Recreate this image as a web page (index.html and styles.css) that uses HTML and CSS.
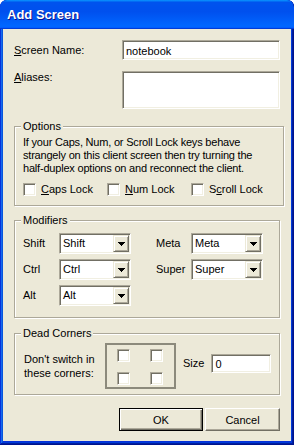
FILE: index.html
```html
<!DOCTYPE html>
<html lang="en">
<head>
    <meta charset="UTF-8">
    <title>Add Screen</title>
    <link rel="stylesheet" href="styles.css">
</head>
<body>

    <div class="window">
        <div class="titlebar">
            <span class="title">Add Screen</span>
        </div>

        <div class="client">
            <!-- Имя экрана -->
            <div class="row name-row">
                <label class="row-label"><u>S</u>creen Name:</label>
                <div class="field">notebook</div>
            </div>

            <div class="row alias-row">
                <label class="row-label"><u>A</u>liases:</label>
                <div class="field field-tall"></div>
            </div>

            <!-- Опции -->
            <fieldset class="group options">
                <legend>Options</legend>
                <p class="note">If your Caps, Num, or Scroll Lock keys behave<br>strangely on this client screen then try turning the<br>half-duplex options on and reconnect the client.</p>
                <div class="checks">
                    <label class="check"><span class="box"></span><span><u>C</u>aps Lock</span></label>
                    <label class="check"><span class="box"></span><span><u>N</u>um Lock</span></label>
                    <label class="check"><span class="box"></span><span>S<u>c</u>roll Lock</span></label>
                </div>
            </fieldset>

            <!-- Модификаторы -->
            <fieldset class="group modifiers">
                <legend>Modifiers</legend>
                <div class="mod-grid">
                    <span>Shift</span>
                    <div class="combo"><span class="combo-text">Shift</span><span class="combo-btn"><svg width="7" height="4" shape-rendering="crispEdges"><path d="M0 0h7v1H0zM1 1h5v1H1zM2 2h3v1H2zM3 3h1v1H3z"/></svg></span></div>
                    <span>Meta</span>
                    <div class="combo"><span class="combo-text">Meta</span><span class="combo-btn"><svg width="7" height="4" shape-rendering="crispEdges"><path d="M0 0h7v1H0zM1 1h5v1H1zM2 2h3v1H2zM3 3h1v1H3z"/></svg></span></div>

                    <span>Ctrl</span>
                    <div class="combo"><span class="combo-text">Ctrl</span><span class="combo-btn"><svg width="7" height="4" shape-rendering="crispEdges"><path d="M0 0h7v1H0zM1 1h5v1H1zM2 2h3v1H2zM3 3h1v1H3z"/></svg></span></div>
                    <span>Super</span>
                    <div class="combo"><span class="combo-text">Super</span><span class="combo-btn"><svg width="7" height="4" shape-rendering="crispEdges"><path d="M0 0h7v1H0zM1 1h5v1H1zM2 2h3v1H2zM3 3h1v1H3z"/></svg></span></div>

                    <span>Alt</span>
                    <div class="combo"><span class="combo-text">Alt</span><span class="combo-btn"><svg width="7" height="4" shape-rendering="crispEdges"><path d="M0 0h7v1H0zM1 1h5v1H1zM2 2h3v1H2zM3 3h1v1H3z"/></svg></span></div>
                </div>
            </fieldset>

            <!-- Мёртвые углы -->
            <fieldset class="group corners">
                <legend>Dead Corners</legend>
                <div class="corner-row">
                    <p class="corner-text">Don't switch in<br>these corners:</p>
                    <div class="corner-box">
                        <span class="box small"></span>
                        <span class="box small"></span>
                        <span class="box small"></span>
                        <span class="box small"></span>
                    </div>
                    <div class="size">
                        <span>Size</span>
                        <div class="field field-size">0</div>
                    </div>
                </div>
            </fieldset>

            <div class="buttons">
                <button class="btn btn-default">OK</button>
                <button class="btn">Cancel</button>
            </div>
        </div>
    </div>

</body>
</html>
```

FILE: styles.css
```css
* {
    margin: 0;
    padding: 0;
    box-sizing: border-box;
}

body {
    background-color: #fff;
    font-family: 'Liberation Sans', Arial, sans-serif;
    font-size: 11px;
    line-height: 13px;
    color: #000;
}

/* Окно */
.window {
    width: 294px;
    height: 445px;
    display: flex;
    flex-direction: column;
    background-color: #0831d9;
    border-radius: 7px 7px 0 0;
    box-shadow: inset -1px -1px #00138c, inset 1px 1px #0831d9,
                inset -2px -2px #001ea0, inset 2px 2px #166aee,
                inset -3px -3px #003bda, inset 3px 3px #0855dd;
    overflow: hidden;
}

.titlebar {
    height: 29px;
    display: flex;
    align-items: center;
    padding-left: 7px;
    background: linear-gradient(180deg, #0997ff, #0053ee 8%, #0050ee 40%, #06f 88%, #06f 93%, #005bff 95%, #003dd7 96%, #003dd7);
    border-radius: 7px 7px 0 0;
}

.title {
    color: #fff;
    font-weight: bold;
    font-size: 13px;
    text-shadow: 1px 1px #0f1089;
    padding-bottom: 1px;
}

.client {
    flex: 1;
    margin: 0 3px 4px;
    background-color: #ece9d8;
    padding: 11px 11px 0;
}

/* Поля ввода */
.row {
    display: flex;
}

.name-row {
    align-items: center;
}

.alias-row {
    margin-top: 11px;
    align-items: flex-start;
}

.row-label {
    width: 108px;
}

.field {
    flex: 1;
    height: 20px;
    background-color: #fff;
    border: 1px solid;
    border-color: #aca899 #fff #fff #aca899;
    box-shadow: inset 1px 1px 0 #716f64, inset -1px -1px 0 #f1efe2;
    padding: 2px 3px;
    line-height: 16px;
}

.field-tall {
    height: 38px;
}

/* Группы */
.group {
    margin-top: 11px;
    border: 1px solid #aca899;
    box-shadow: inset 1px 1px 0 #fff, 1px 1px 0 #fff;
    padding: 3px 8px 7px;
}

.group legend {
    margin-left: -2px;
    padding: 0 2px;
    line-height: 13px;
    background-color: #ece9d8;
}

.modifiers,
.corners {
    margin-top: 8px;
}

.note {
    white-space: nowrap;
    letter-spacing: -0.2px;
}

.checks {
    display: grid;
    grid-template-columns: 84px 84px 84px;
    margin-top: 6px;
}

.check {
    display: flex;
    align-items: center;
    gap: 5px;
    height: 17px;
}

.box {
    display: block;
    width: 13px;
    height: 13px;
    background-color: #fff;
    border: 1px solid;
    border-color: #aca899 #fff #fff #aca899;
    box-shadow: inset 1px 1px 0 #716f64, inset -1px -1px 0 #f1efe2;
}

/* Модификаторы */
.modifiers {
    padding-top: 6px;
    padding-bottom: 11px;
}

.mod-grid {
    display: grid;
    grid-template-columns: 36px 97px 35px 72px;
    row-gap: 5px;
    align-items: center;
}

.combo {
    width: 72px;
    height: 21px;
    display: flex;
    background-color: #fff;
    border: 1px solid;
    border-color: #aca899 #fff #fff #aca899;
    box-shadow: inset 1px 1px 0 #716f64, inset -1px -1px 0 #f1efe2;
    padding: 1px;
}

.combo-text {
    flex: 1;
    padding-left: 2px;
    line-height: 17px;
}

.combo-btn {
    width: 16px;
    height: 17px;
    display: flex;
    align-items: center;
    justify-content: center;
    background-color: #ece9d8;
    border: 1px solid;
    border-color: #ece9d8 #716f64 #716f64 #ece9d8;
    box-shadow: inset 1px 1px 0 #fff, inset -1px -1px 0 #aca899;
}

/* Углы */
.corners {
    margin-top: 9px;
    padding-top: 3px;
    padding-bottom: 5px;
}

.corner-row {
    display: flex;
    align-items: center;
}

.corner-text {
    width: 82px;
    padding-left: 1px;
    line-height: 14px;
}

.corner-box {
    width: 71px;
    height: 46px;
    border: 2px solid #8c8a7c;
    display: grid;
    grid-template-columns: 13px 13px;
    column-gap: 20px;
    row-gap: 8px;
    padding: 4px 0 0 10px;
}

.box.small {
    width: 13px;
    height: 13px;
}

.size {
    display: flex;
    align-items: center;
    gap: 7px;
    margin-left: 7px;
    margin-top: -5px;
}

.field-size {
    flex: none;
    width: 60px;
    height: 19px;
    line-height: 15px;
}

/* Кнопки */
.buttons {
    display: flex;
    justify-content: flex-end;
    gap: 2px;
    margin-top: 13px;
}

.btn {
    width: 75px;
    height: 23px;
    font-family: inherit;
    font-size: 11px;
    background-color: #ece9d8;
    border: 1px solid;
    border-color: #fff #716f64 #716f64 #fff;
    box-shadow: inset -1px -1px 0 #aca899;
}

.btn-default {
    width: 84px;
    border: 1px solid #000;
    box-shadow: inset 1px 1px 0 #fff, inset -1px -1px 0 #716f64, inset -2px -2px 0 #aca899;
}
```
